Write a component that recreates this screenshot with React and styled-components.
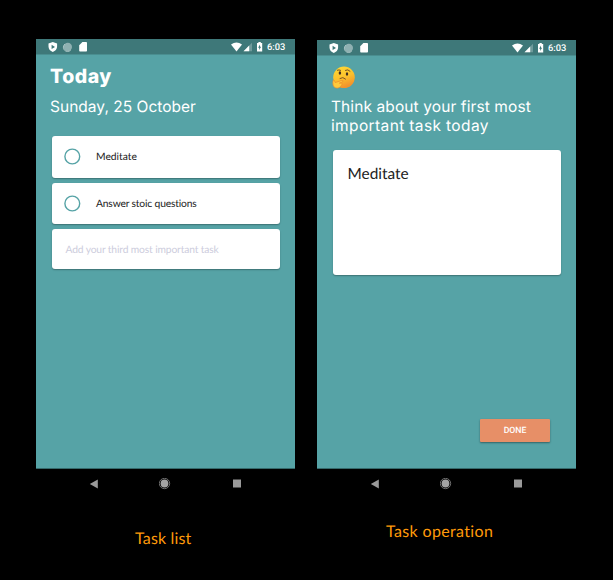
import React from 'react';
import styled, { createGlobalStyle } from 'styled-components';

const Global = createGlobalStyle`
  * { box-sizing: border-box; }
  body { margin: 0; background: #000; text-rendering: geometricPrecision; }
`;

const Board = styled.main`
  width: 613px;
  height: 580px;
  padding: 39px 0 0 36px;
  display: flex;
  align-items: flex-start;
  gap: 22px;
  background: #000;
  overflow: hidden;
`;

const Column = styled.section`
  width: 259px;
  padding-top: ${(p) => p.$drop || 0}px;
  display: flex;
  flex-direction: column;
`;

const Screen = styled.div`
  height: ${(p) => p.$height}px;
  background: #56a3a6;
  border-bottom: 1px solid #35696b;
  display: flex;
  flex-direction: column;
`;

const StatusBar = styled.header`
  height: 16px;
  flex: none;
  padding: 0 10px 0 12px;
  display: flex;
  align-items: center;
  justify-content: space-between;
  background: #3e7879;
  border-bottom: 1px solid #4a8e90;
`;

const Glyphs = styled.svg`
  display: block;
  flex: none;
`;

const StatusRight = styled.div`
  display: flex;
  align-items: center;
  gap: 3px;
`;

const Clock = styled.span`
  width: 18px;
  font: 500 9.3px/15px Roboto, sans-serif;
  padding-top: 1px;
  white-space: nowrap;
  color: #fff;
`;

const Title = styled.h1`
  margin: 9px 0 0 14px;
  font: 800 19.5px/24px Inter, sans-serif;
  letter-spacing: 0.5px;
  color: #fff;
`;

const Line = styled.p`
  margin: 0;
  font: 400 15.5px/18.5px Inter, sans-serif;
  letter-spacing: ${(p) => p.$spacing}px;
  white-space: nowrap;
  color: #fff;
`;

const Subtitle = styled.div`
  margin: ${(p) => p.$top}px 0 0 14px;
`;

const TaskStack = styled.div`
  margin: 19.5px 15.5px 0 15.5px;
  display: flex;
  flex-direction: column;
  gap: 5px;
`;

const Card = styled.div`
  height: ${(p) => p.$height}px;
  border-radius: 3px;
  background: #fff;
  box-shadow: 0 1px 1.5px rgba(0, 0, 0, 0.3);
`;

const TaskCard = styled(Card)`
  display: flex;
  align-items: center;
  padding-left: ${(p) => (p.$empty ? 14 : 12.5)}px;
  gap: 15px;
`;

const Check = styled.svg`
  display: block;
  flex: none;
  width: 17px;
  height: 17px;
`;

const TaskText = styled.span`
  font: 400 10.3px/14px Lato, sans-serif;
  padding-top: 1px;
  letter-spacing: ${(p) => p.$spacing || 0}px;
  color: ${(p) => (p.$muted ? '#cdcddd' : '#1c1c1c')};
  white-space: nowrap;
`;

const Editor = styled(Card)`
  margin: 15px 15.5px 0 15.5px;
  padding: 14px 15px;
  font: 400 15.4px/20px Lato, sans-serif;
  color: #222;
`;

const Emoji = styled.svg`
  display: block;
  flex: none;
  margin: 9px 0 0 14px;
`;

const Done = styled.button`
  width: 70px;
  height: 23px;
  margin: auto 26px 26px auto;
  padding: 1px 0 0;
  border: 0;
  border-radius: 1px;
  background: #e78f67;
  box-shadow: 0 1px 2px rgba(0, 0, 0, 0.4);
  font: 500 8.7px/22px Roboto, sans-serif;
  text-rendering: geometricPrecision;
  color: #fff;
`;

const NavBar = styled.nav`
  height: 29px;
  padding: 0 53.5px 0 53px;
  display: flex;
  align-items: center;
  justify-content: space-between;
`;

const Caption = styled.div`
  margin: ${(p) => p.$top}px 0 0 ${(p) => p.$left}px;
  font: 400 16px/20px Lato, sans-serif;
  font-variant-ligatures: none;
  letter-spacing: ${(p) => p.$spacing}px;
  color: #ff9a0a;
  white-space: nowrap;
`;

function Status() {
  return (
    <StatusBar>
      <Glyphs width="42" height="12" viewBox="0 0 42 12">
        <path fill="#fff" fillRule="evenodd" d="M4.8 1 9.1 2.6V5.6C9.1 8.2 7.3 10.2 4.8 11 2.3 10.2.5 8.2.5 5.6V2.6ZM3.6 3.8V8L7 5.9Z" />
        <circle cx="19.8" cy="6" r="4.2" fill="#8fb1b2" />
        <path d="M17 3A4.2 4.2 0 1 0 22.8 9" fill="none" stroke="#aec7c7" strokeWidth=".9" />
        <path fill="#fff" d="M34.4 1H38.2Q39 1 39 1.8V9.8Q39 10.6 38.2 10.6H32Q31.2 10.6 31.2 9.8V4.2Z" />
      </Glyphs>
      <StatusRight>
        <Glyphs width="33" height="12" viewBox="0 0 33 12">
          <path fill="#fff" d="M0 3.5Q5.5-.3 11 3.5L5.5 10.5Z" />
          <path fill="#6f9a9b" d="M21 1.8V10.3H12.5Z" />
          <path fill="#fff" d="M18.2 4.6V10.3H12.5Z" />
          <path fill="#fff" fillRule="evenodd" d="M27.4 1H29.8V2H31.2V10.5H26V2H27.4ZM29 3.4 27.1 6.7H28.2V9L30.1 5.7H29Z" />
        </Glyphs>
        <Clock>6:03</Clock>
      </StatusRight>
    </StatusBar>
  );
}

function Navigation() {
  return (
    <NavBar>
      <Glyphs width="10" height="10" viewBox="0 0 10 10"><path fill="#9a9a9a" d="M.8 5 8.8.6V9.4Z" /></Glyphs>
      <Glyphs width="12" height="12" viewBox="0 0 12 12">
        <circle cx="5.5" cy="5.5" r="5.2" fill="none" stroke="#858585" strokeWidth=".8" />
        <circle cx="5.5" cy="5.5" r="3.9" fill="#a3a3a3" />
      </Glyphs>
      <Glyphs width="10" height="10" viewBox="0 0 10 10"><rect x="1" y=".5" width="8" height="8" fill="#9a9a9a" /></Glyphs>
    </NavBar>
  );
}

function Circle() {
  return (
    <Check viewBox="0 0 17 17">
      <circle cx="8.3" cy="8.5" r="7.4" fill="none" stroke="#56a3a6" strokeWidth="1.4" />
    </Check>
  );
}

function ThinkingFace() {
  return (
    <Emoji width="25" height="24" viewBox="0 0 25 24">
      <defs>
        <linearGradient id="face" x1="0" y1="0" x2="0.4" y2="1">
          <stop offset="0" stopColor="#ffdc35" />
          <stop offset=".6" stopColor="#fbc02d" />
          <stop offset="1" stopColor="#f2932b" />
        </linearGradient>
      </defs>
      <circle cx="13" cy="12.3" r="10.8" fill="url(#face)" />
      <ellipse cx="8.9" cy="8" rx="1.2" ry="1.7" fill="#3e2b22" />
      <ellipse cx="16" cy="9" rx="1.2" ry="1.7" fill="#3e2b22" />
      <path d="M6.4 5.2Q8 4.5 9.6 5.3M14.4 5.3Q17 3.8 19 6.2M9 13.4Q12 11.3 14.5 14" fill="none" stroke="#6a4722" strokeWidth=".9" strokeLinecap="round" />
      <path d="M2.1 15.2Q3.7 14.6 4.2 17.6L10.8 15.4Q12.5 15.1 12 16.5L8.3 18.2H10.5Q11.8 18.7 10.7 19.9L9.3 22Q7 23.8 4.3 22.8 1.5 21.5 1.8 17.6Z" fill="#ffca3b" stroke="#e9852b" strokeWidth=".6" />
    </Emoji>
  );
}

export default function App() {
  return (
    <>
      <Global />
      <Board>
        <Column>
          <Screen $height={430}>
            <Status />
            <Title>Today</Title>
            <Subtitle $top={10}><Line $spacing={0.02}>Sunday, 25 October</Line></Subtitle>
            <TaskStack>
              <TaskCard $height={41.5}><Circle /><TaskText>Meditate</TaskText></TaskCard>
              <TaskCard $height={41.5}><Circle /><TaskText $spacing={-0.17}>Answer stoic questions</TaskText></TaskCard>
              <TaskCard $height={40} $empty><TaskText $muted $spacing={-0.15}>Add your third most important task</TaskText></TaskCard>
            </TaskStack>
          </Screen>
          <Navigation />
          <Caption $top={31} $left={99} $spacing={0.15}>Task list</Caption>
        </Column>
        <Column $drop={1}>
          <Screen $height={429}>
            <Status />
            <ThinkingFace />
            <Subtitle $top={9}>
              <Line $spacing={0.1}>Think about your first most</Line>
              <Line $spacing={0.37}>important task today</Line>
            </Subtitle>
            <Editor $height={125}>Meditate</Editor>
            <Done>DONE</Done>
          </Screen>
          <Navigation />
          <Caption $top={24} $left={69} $spacing={0.35}>Task operation</Caption>
        </Column>
      </Board>
    </>
  );
}
